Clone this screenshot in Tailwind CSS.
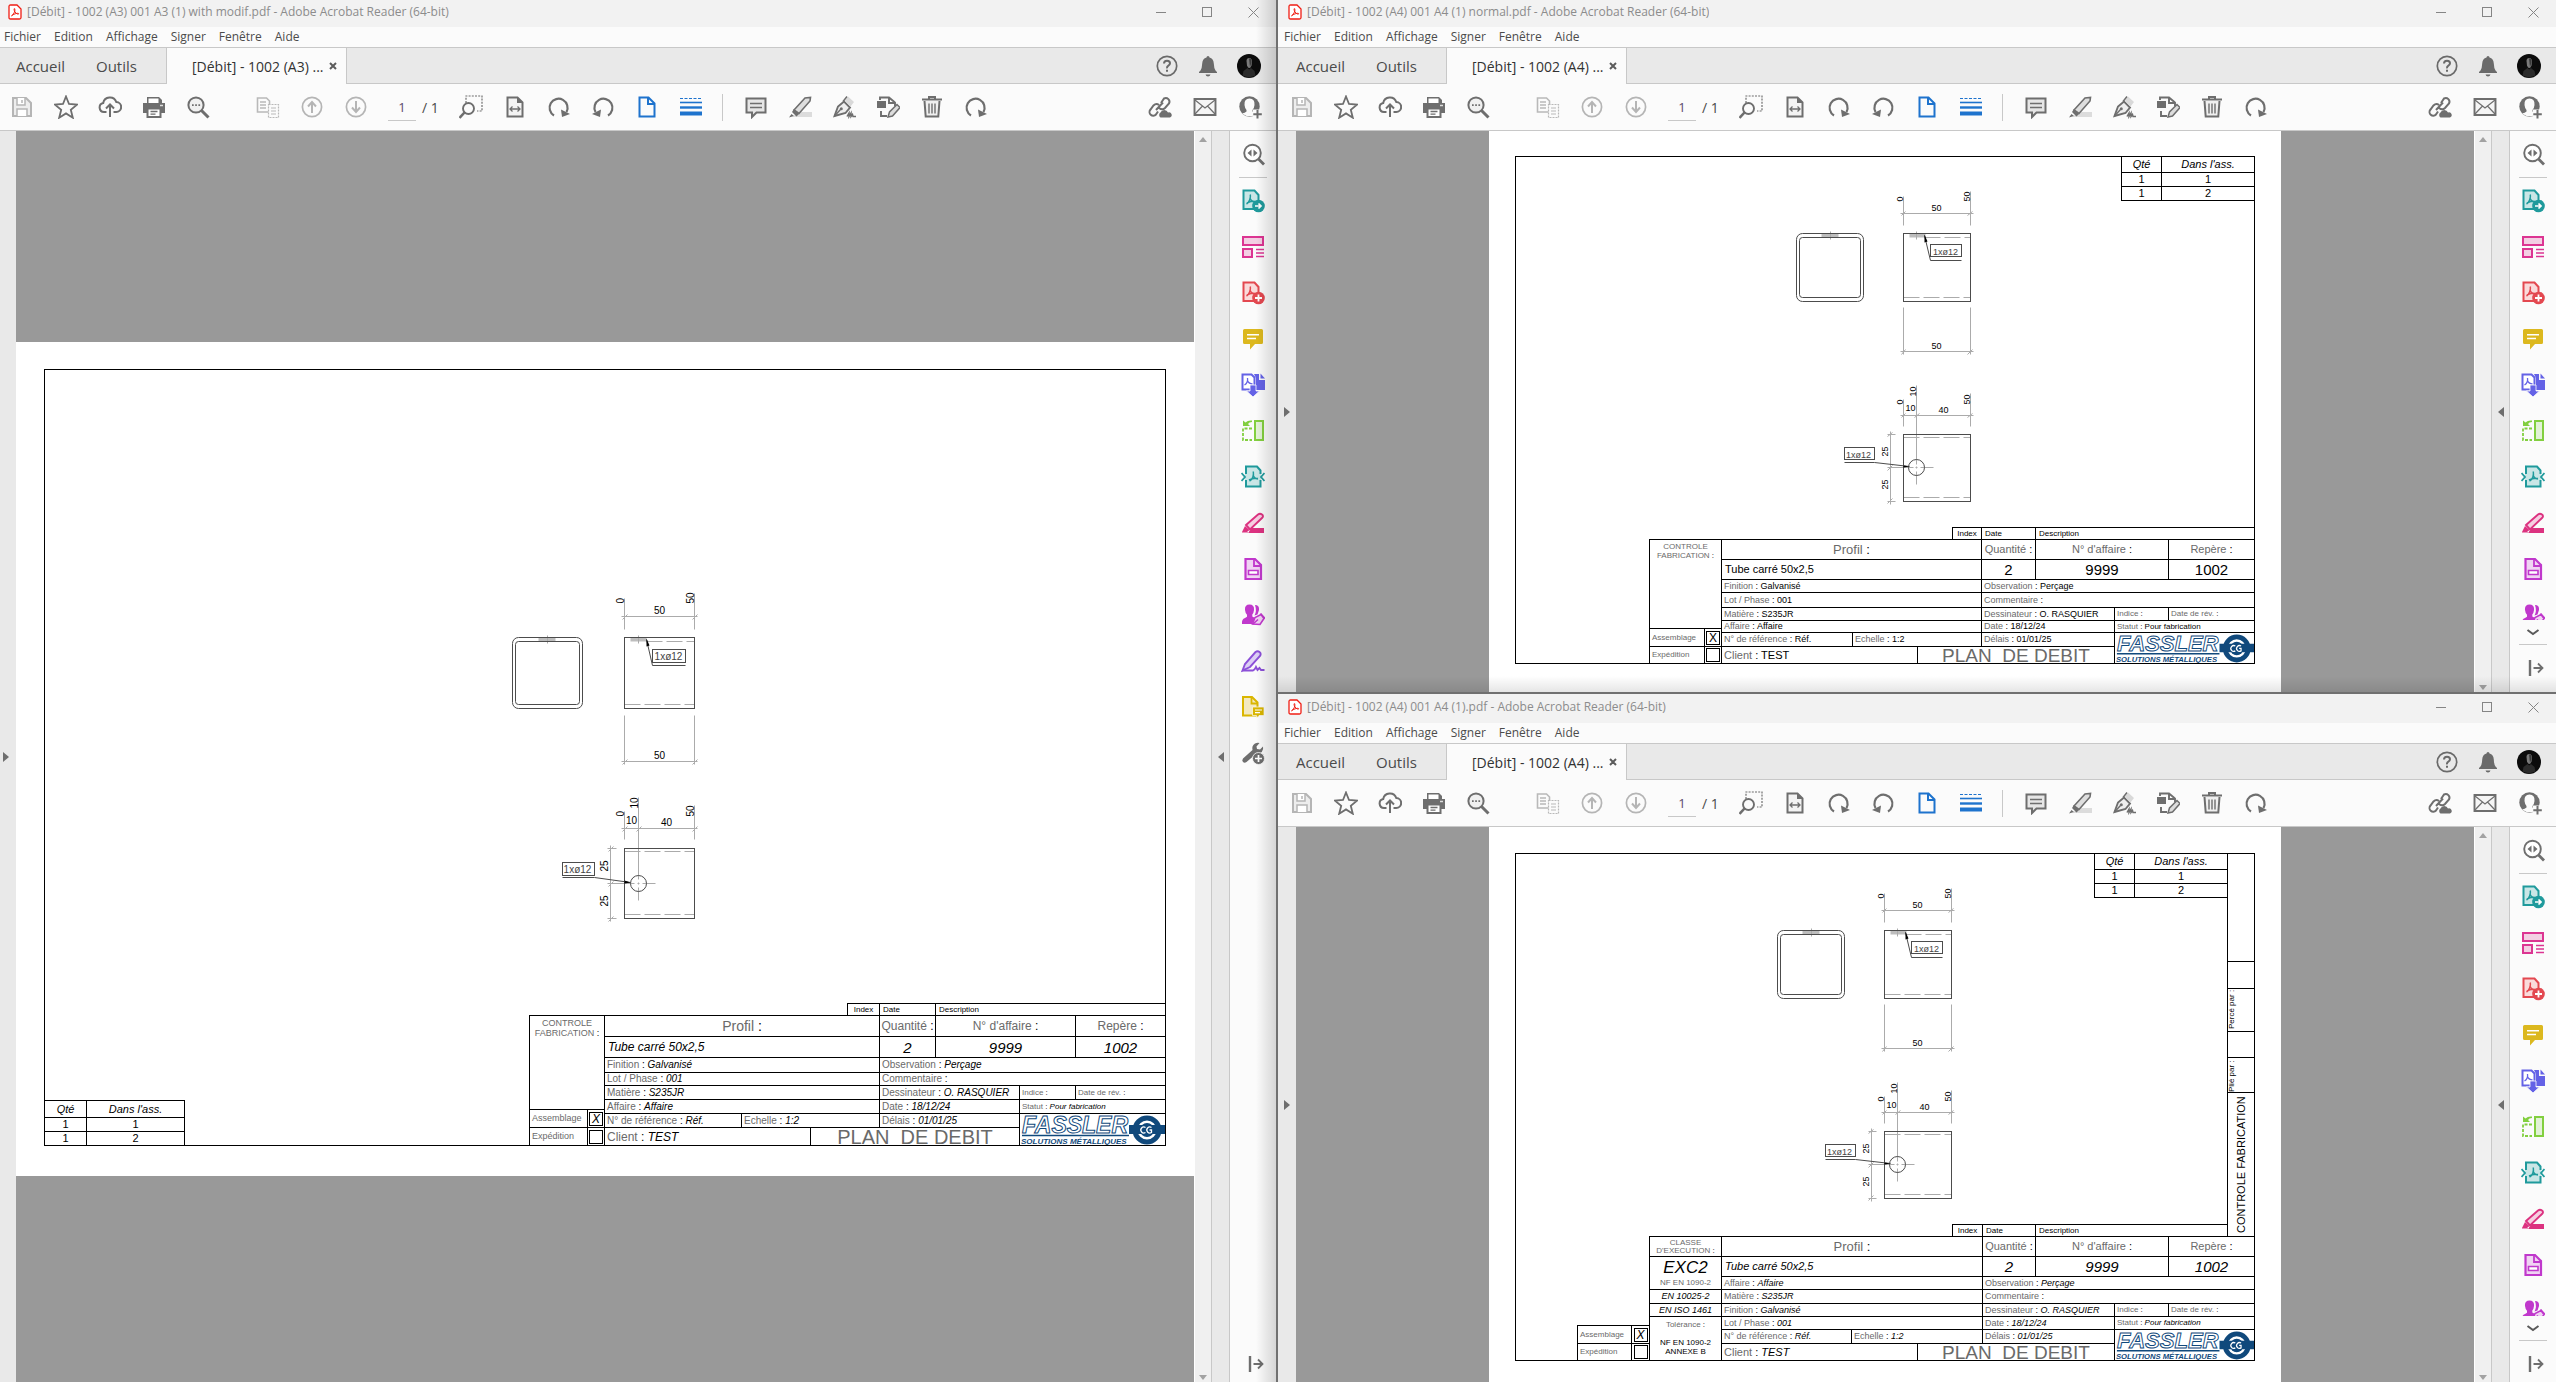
<!DOCTYPE html>
<html lang="fr">
<head>
<meta charset="utf-8">
<title>Adobe Acrobat Reader</title>
<script src="https://cdn.jsdelivr.net/npm/@tailwindcss/browser@4"></script>
</head>
<body class="h-screen overflow-hidden bg-[#707070] font-['Open_Sans',sans-serif] text-[#4b4b4b]">
<svg class="hidden" aria-hidden="true">
  <symbol id="i-pdf" viewBox="0 0 14 16"><path d="M1 2.500Q1 1 2.500 1H9l4 4v8.500q0 1.500-1.500 1.500h-9Q1 15 1 13.500Z" fill="#fff" stroke="#f01e14" stroke-width="1.300"/><path d="M3.500 11.800c2-.8 4-5 3.300-7-.8-1-1.200 1 .2 3.200s4 2.600 3.700 1.700-4-.3-7.200 2.100Z" fill="none" stroke="#f01e14" stroke-width="1"/></symbol>
  <symbol id="i-save" viewBox="0 0 24 24"><path d="M3 3h13l5 5v13H3Z" fill="#ededed" stroke="#b5b5b5" stroke-width="2"/><path d="M7 3v7h8V3M12 5v3M7 21v-7h10v7" fill="#fff" stroke="#b5b5b5" stroke-width="1.500"/></symbol>
  <symbol id="i-star" viewBox="0 0 24 24"><path d="m12 1.500 3 7.500 8 .6-6.200 5.200 2 7.900L12 18.400l-6.800 4.300 2-7.900L1 9.600 9 9Z" fill="none" stroke="#6e6e6e" stroke-width="1.800"/></symbol>
  <symbol id="i-cloud" viewBox="0 0 24 24"><path d="M8.500 17H6a4.500 4.500 0 0 1-.8-8.900A6.800 6.800 0 0 1 18.300 7 5 5 0 0 1 18 17h-2.500" fill="none" stroke="#6e6e6e" stroke-width="2"/><path d="M12 22V10M8 13.500 12 9.500l4 4" fill="none" stroke="#6e6e6e" stroke-width="2"/></symbol>
  <symbol id="i-print" viewBox="0 0 24 24"><path d="M5 2h12l3 3v4H5Z" fill="#6e6e6e"/><path d="M6.500 3.500h10v5h-10Z" fill="#fff"/><path d="M1 8h22v10H1Z" fill="#6e6e6e"/><path d="M5.500 13.500h13V22h-13Z" fill="#fff" stroke="#6e6e6e" stroke-width="2"/><path d="M8.500 16.500h7M8.500 19.200h5" stroke="#6e6e6e" stroke-width="1.300"/><path d="M18 10.500h3" stroke="#ddd" stroke-width="1.500"/></symbol>
  <symbol id="i-zoom" viewBox="0 0 24 24"><circle cx="10" cy="10" r="7.600" fill="#f0f0f0" stroke="#6e6e6e" stroke-width="2"/><path d="m15.500 15.500 7 7" stroke="#6e6e6e" stroke-width="3"/><path d="M6 9.200h1.700v1.700H6Zm3.200 0h1.700v1.700H9.200Zm3.200 0h1.700v1.700h-1.700Z" fill="#6e6e6e"/></symbol>
  <symbol id="i-pages" viewBox="0 0 24 24"><path d="M1.500 3h9l3 3v11h-12Z" fill="none" stroke="#b9b9b9" stroke-width="1.600"/><path d="M4 7h6M4 10h6M4 13h6" stroke="#b9b9b9" stroke-width="1.300"/><path d="M12.500 9.500h10v13h-10Z" fill="#fbfbfb" stroke="#b9b9b9" stroke-width="1.200" stroke-dasharray="2 1"/><path d="M15 13h5M15 16h5M15 19h5" stroke="#b9b9b9" stroke-width="1.200"/></symbol>
  <symbol id="i-up" viewBox="0 0 24 24"><circle cx="12" cy="12" r="9.600" fill="none" stroke="#b5b5b5" stroke-width="1.700"/><path d="M12 18V7m-4 4.500 4-4.500 4 4.500" fill="none" stroke="#b5b5b5" stroke-width="2"/></symbol>
  <symbol id="i-down" viewBox="0 0 24 24"><circle cx="12" cy="12" r="9.600" fill="none" stroke="#b5b5b5" stroke-width="1.700"/><path d="M12 6v11m-4-4.500 4 4.500 4-4.500" fill="none" stroke="#b5b5b5" stroke-width="2"/></symbol>
  <symbol id="i-marquee" viewBox="0 0 24 24"><path d="M7 8V1h16v15h-5" fill="none" stroke="#6e6e6e" stroke-width="1.200" stroke-dasharray="2 1.200"/><circle cx="9.500" cy="13.500" r="5.500" fill="#fbfbfb" stroke="#6e6e6e" stroke-width="1.900"/><path d="m5.500 17.500-5 5.500" stroke="#6e6e6e" stroke-width="2.600"/></symbol>
  <symbol id="i-fit" viewBox="0 0 24 24"><path d="M4.500 2.500h10l5 5v14h-15Z" fill="#f3f3f3" stroke="#6e6e6e" stroke-width="2"/><path d="M14 2v6h6Z" fill="#6e6e6e"/><path d="M7 14h10m-7.500-2.500L7 14l2.500 2.500m5-5L17 14l-2.500 2.500" fill="none" stroke="#6e6e6e" stroke-width="1.300"/></symbol>
  <symbol id="i-cw" viewBox="0 0 24 24"><path d="M7 20.500a9 9 0 1 1 12.500-3.500" fill="none" stroke="#6e6e6e" stroke-width="2.200"/><path d="m14 14.500 1 7.500 8-3Z" fill="#6e6e6e"/></symbol>
  <symbol id="i-ccw" viewBox="0 0 24 24"><path d="M17 20.500A9 9 0 1 0 4.500 17" fill="none" stroke="#6e6e6e" stroke-width="2.200"/><path d="m10 14.500-1 7.500-8-3Z" fill="#6e6e6e"/></symbol>
  <symbol id="i-page" viewBox="0 0 24 24"><path d="M4.500 2.500h9l6 6v13h-15Z M13 3v6h6" fill="none" stroke="#1e73cd" stroke-width="2"/></symbol>
  <symbol id="i-lines" viewBox="0 0 24 24"><path d="M1 3.500h22" stroke="#1e73cd" stroke-width="1.200" stroke-dasharray="3 1.500"/><path d="M1 7.500h22" stroke="#1e73cd" stroke-width="1.600"/><path d="M1 12.500h22" stroke="#1e73cd" stroke-width="2.400"/><path d="M1 18.500h22" stroke="#1e73cd" stroke-width="4"/></symbol>
  <symbol id="i-note" viewBox="0 0 24 24"><path d="M2.500 3.500h19v14h-9l-4.500 4.500v-4.500H2.500Z" fill="#e6e6e6" stroke="#6e6e6e" stroke-width="2"/><path d="M6 8.500h12M6 12.500h12" stroke="#6e6e6e" stroke-width="1.300"/></symbol>
  <symbol id="i-mark" viewBox="0 0 24 24"><path d="M11 17h13v5H4Z" fill="#dcdcdc"/><path d="m6 15 11-12 5.500-.5L22 6 11 18.500Z" fill="#dedede" stroke="#6e6e6e" stroke-width="1.600"/><path d="m6 14 5 5-2.500 2.500L4 17Zm-2.500 5L6 21l-5 1.500Z" fill="#6e6e6e"/></symbol>
  <symbol id="i-sign" viewBox="0 0 24 24"><path d="M2.500 21 6 11.500 12 6.500l6 6-4.500 5.500Z" fill="#eee" stroke="#6e6e6e" stroke-width="1.900"/><path d="m2.500 21 6-6.500" stroke="#6e6e6e" stroke-width="1.400"/><circle cx="9.300" cy="13.800" r="1.500" fill="#6e6e6e"/><path d="m13 5.500 3-4 6 5.500-3.500 4.500Z" fill="#d9d9d9"/><path d="m11 6.500 4-5M15 21.500l2-3.500v3.500l2-3.500v3.500l1.500-2 .5 2h3" fill="none" stroke="#6e6e6e" stroke-width="1.500"/></symbol>
  <symbol id="i-edit" viewBox="0 0 24 24"><path d="M1 6h9v7H1Z" fill="#6e6e6e"/><path d="M4 5V2.500h9l6 5M5 16v5h6M13 2v6h6v3" fill="none" stroke="#6e6e6e" stroke-width="1.900"/><path d="m12 22 1.500-5L21 9.500l3 3L16.500 21Z" fill="#ddd" stroke="#6e6e6e" stroke-width="1.500"/></symbol>
  <symbol id="i-trash" viewBox="0 0 24 24"><path d="M2 4.500h20M9 4V2h6v2" fill="none" stroke="#6e6e6e" stroke-width="2"/><path d="m4.500 6 1.200 15.500h12.600L19.500 6" fill="#efefef" stroke="#6e6e6e" stroke-width="2"/><path d="M9 8.500v10M12 8.500v10M15 8.500v10" stroke="#6e6e6e" stroke-width="1.400"/></symbol>
  <symbol id="i-link" viewBox="0 0 24 24"><path d="m13 8 3-4.500a3.700 3.700 0 0 1 5 5L17 13c-2 2-4 1.500-6 0M11 10c-2-1.500-4-1-5.500.5L2.500 14.500a3.700 3.700 0 0 0 5.500 5l2-3M8 15l7-7.500" fill="none" stroke="#6e6e6e" stroke-width="2"/><path d="M12.500 22.500a3 3 0 0 1 0-5 4 4 0 0 1 7.500 0 2.600 2.600 0 0 1 2 5Z" fill="#6e6e6e"/></symbol>
  <symbol id="i-mail" viewBox="0 0 24 24"><path d="M1.500 4h21v16h-21Z" fill="#f5f5f5" stroke="#6e6e6e" stroke-width="1.900"/><path d="m2 5 10 8L22 5M2 19l7.500-8M22 19l-7.500-8" fill="none" stroke="#6e6e6e" stroke-width="1.200"/></symbol>
  <symbol id="i-user" viewBox="0 0 24 24"><circle cx="11.500" cy="11.500" r="10.200" fill="#6e6e6e"/><path d="M11.500 3.500q5.500 0 5 6.500-.3 3-2 5v1.500q1.500 1.300 4.500 2-3.500 2.700-7.500 2.700T4 18.500q3-.7 4.500-2V15q-1.700-2-2-5-.5-6.500 5-6.500Z" fill="#fbfbfb"/><path d="M15 14.500h9V24h-9Z" fill="#fbfbfb"/><path d="M19.500 15v8.500M15.300 19.200h8.500" stroke="#6e6e6e" stroke-width="2"/></symbol>
  <symbol id="i-help" viewBox="0 0 24 24"><circle cx="12" cy="12" r="9.700" fill="none" stroke="#6a6a6a" stroke-width="1.700"/><path d="M9 9.500q0-2.800 3-2.800t3 2.600q0 1.500-1.600 2.400T12 14.300" fill="none" stroke="#6a6a6a" stroke-width="2"/><path d="M11 15.700h2v2h-2Z" fill="#6a6a6a"/></symbol>
  <symbol id="i-bell" viewBox="0 0 24 24"><path d="M12 2q1.500 0 1.500 1.500 4 1 4.300 6 .2 5 1.700 7l1.500 1.500v1H3v-1l1.500-1.500q1.500-2 1.700-7 .3-5 4.300-6Q10.500 2 12 2ZM9.500 20.500h5q-.5 2-2.500 2t-2.500-2Z" fill="#6a6a6a"/></symbol>
  <symbol id="i-avatar" viewBox="0 0 24 24"><circle cx="12" cy="12" r="12" fill="#0b0b0b"/><path d="M9.500 7q0-3 2.700-3T15 7.500l-.5 4q-1 2.500-2.300 2.500T10 11.500Z" fill="#7a7a7a"/><path d="M12 4.500q3-.5 2.500 4L13 13Z" fill="#3a3a3a"/><path d="m6.500 17 4-3 1.700 1.500L14 14l3.500 3 1 4.500-6.500 2-6.500-2Z" fill="#2b2b2b"/></symbol>
  <symbol id="s-find" viewBox="0 0 24 24"><circle cx="11.500" cy="11" r="8.300" fill="#fff" stroke="#6e6e6e" stroke-width="1.900"/><path d="m17.500 17 5.500 5.500" stroke="#6e6e6e" stroke-width="2.800"/><path d="M10.500 7.500v7L6.500 11Zm2 0v7l4-3.500Z" fill="#6e6e6e"/></symbol>
  <symbol id="s-export" viewBox="0 0 24 24"><path d="M2.500 1.500h11l4 4.500v14h-15Z" fill="#c9e6e6" stroke="#1f9a9c" stroke-width="2"/><path d="M5.500 15c2.500-1.500 4.500-6 3.800-9.500M9 9q1 4 6 4.500M6 14q4-2.500 8-1.500" fill="none" stroke="#1f9a9c" stroke-width="1.500"/><circle cx="17.500" cy="17" r="6.300" fill="#1f9a9c"/><path d="M14 17h6m-2.500-2.500L20 17l-2.500 2.500" fill="none" stroke="#fff" stroke-width="1.700"/></symbol>
  <symbol id="s-organize" viewBox="0 0 24 24"><path d="M2 2h20v8H2ZM2 14h9v8H2Z" fill="#f3cfe3" stroke="#dc3592" stroke-width="2"/><path d="M15 14.500h8M15 18h8M15 21.500h8" stroke="#dc3592" stroke-width="1.400"/></symbol>
  <symbol id="s-create" viewBox="0 0 24 24"><path d="M2.500 1.500h11l4 4.500v14h-15Z" fill="#fadadb" stroke="#e34850" stroke-width="2"/><path d="M5.500 15c2.500-1.500 4.500-6 3.800-9.500M9 9q1 4 6 4.500M6 14q4-2.500 8-1.500" fill="none" stroke="#e34850" stroke-width="1.500"/><circle cx="17.500" cy="17" r="6.300" fill="#e34850"/><path d="M14 17h7M17.500 13.500v7" stroke="#fff" stroke-width="1.800"/></symbol>
  <symbol id="s-comment" viewBox="0 0 24 24"><path d="M3.500 2h17Q22 2 22 3.500v12q0 1.500-1.500 1.500H14l-5 5.500V17H3.500Q2 17 2 15.500v-12Q2 2 3.500 2Z" fill="#dcb81e"/><path d="M6 7.800h12M6 11.500h9" stroke="#fff" stroke-width="1.600"/></symbol>
  <symbol id="s-combine" viewBox="0 0 24 24"><path d="M1.500 1.500h9l3 3v12h-12Z" fill="#fff" stroke="#6462e6" stroke-width="2"/><path d="M3.500 12c2.500-1.500 3.500-4 3-7M6.500 7.500q1 3 5 3.500" fill="none" stroke="#6462e6" stroke-width="1.300"/><path d="M13 1h5v6h6v10h-9V5Z" fill="#6462e6"/><path d="m19.500.5 4.500 5h-4.500Z" fill="#6462e6"/><path d="M9 12h6v6h3.500L12 24l-6.500-6H9Z" fill="#6462e6" stroke="#fff" stroke-width=".8"/></symbol>
  <symbol id="s-scan" viewBox="0 0 24 24"><path d="M14 2h8v19h-8Z" fill="#e2f2d6" stroke="#82cf3f" stroke-width="2"/><path d="M11 9.500H2V21h9" fill="none" stroke="#82cf3f" stroke-width="1.800" stroke-dasharray="3 1.500"/><path d="M2 1.500V7h7L7 5q1-2 4-2V1.500Q7 1 4.500 3.500Z" fill="#82cf3f"/></symbol>
  <symbol id="s-compress" viewBox="0 0 24 24"><path d="M5 9V1.500h11l3.500 4V9m0 6v6.500H5V15" fill="#c9e6e6" stroke="#1f9a9c" stroke-width="2"/><path d="M4 9h16v6H4Z" fill="#c9e6e6"/><path d="M8.500 16c2.500-1.500 4.500-5 3.800-9.500M12 10q1 3.500 5 4M8 15q5-2.500 9-1.500" fill="none" stroke="#1f9a9c" stroke-width="1.500"/><path d="m.5 8 3.500 4-3.500 4m23-8L20 12l3.500 4" fill="none" stroke="#1f9a9c" stroke-width="1.800"/></symbol>
  <symbol id="s-redact" viewBox="0 0 24 24"><path d="m5 14 12-10.500q2-1.500 4 0t0 3.500L9 18.500Z" fill="#f6cfe2" stroke="#dc3280" stroke-width="1.900"/><path d="m1 21 3-6 4.500 4L6 21Z" fill="#dc3280"/><path d="M8 21.500v-1l3-3.500h12v5H1v-.5Z" fill="#dc3280"/></symbol>
  <symbol id="s-form" viewBox="0 0 24 24"><path d="M4.500 2H14l6 6v14H4.500Z" fill="#f0d3f3" stroke="#c038cc" stroke-width="2.200"/><path d="M13 2.500V9h7" fill="none" stroke="#c038cc" stroke-width="1.800"/><path d="M7.500 13.500h9.500v4H7.500Z" fill="#fff" stroke="#c038cc" stroke-width="1.600"/></symbol>
  <symbol id="s-people" viewBox="0 0 24 24"><path d="M8.500 1.500q5 0 4.500 5.500-.3 3-1.700 4.500v2L14 15l-3 6H1q-.5-5 3-6l2-1.300v-2Q4.300 10 4 7q-.5-5.500 4.500-5.500Z" fill="#c038cc"/><path d="M14 2q4.500 0 4 5l-1.500 4.500-3 1Q16 8 14 2Z" fill="#c038cc"/><path d="m11.500 21 2.500-6.500 6-3 3 4-4 6Z" fill="#f0d3f3" stroke="#c038cc" stroke-width="1.600"/><path d="m12 21 5-4.500M19.500 10.500l4.500 5" stroke="#c038cc" stroke-width="1.600"/></symbol>
  <symbol id="s-fill" viewBox="0 0 24 24"><path d="M1.500 21.500 4 15 14.500 3q2-1.500 4 0t.5 4L9 18Z" fill="#dccff5" stroke="#8c50d8" stroke-width="1.900"/><path d="M1 21.500h11q2-1 3-3.500l1.500 3 2-2 1.500 2h3.500" fill="none" stroke="#8c50d8" stroke-width="1.900"/></symbol>
  <symbol id="s-more" viewBox="0 0 24 24"><path d="M2 2h9l5.500 5.500v13H2Z" fill="#f3e9c0" stroke="#dab600" stroke-width="2"/><path d="M10.500 2v6.500h6" fill="none" stroke="#dab600" stroke-width="1.800"/><path d="M11.500 12h11.500v8.500h-5L15.500 23v-2.500h-4Z" fill="#dab600" stroke="#fbfbfb" stroke-width=".7"/><path d="M14 15h7M14 17.700h5" stroke="#fff" stroke-width="1.200"/></symbol>
  <symbol id="s-tools" viewBox="0 0 24 24"><path d="M2 17.500 11.500 9Q10.500 4.500 14 2.500q2.500-1.300 4.500-.5l-3 3.500.5 2.500 3 .5 3-3q.8 3-1.200 5.500-2 2-5.300 1.500L5.500 21Q3.500 22.500 2 21t0-3.500Z" fill="#6e6e6e"/><circle cx="17.500" cy="17.500" r="6" fill="#6e6e6e" stroke="#fbfbfb" stroke-width=".8"/><path d="M14 17.500h7M17.500 14v7" stroke="#fff" stroke-width="1.700"/></symbol>
  <symbol id="s-chevron" viewBox="0 0 24 24"><path d="m6.500 10 5.500 4 5.500-4" fill="none" stroke="#5a5a5a" stroke-width="2"/></symbol>
  <symbol id="s-expand" viewBox="0 0 24 24"><path d="M9 4v16" stroke="#6e6e6e" stroke-width="2.400"/><path d="M12.500 12h9M17 7.500l4.500 4.500-4.500 4.500" fill="none" stroke="#6e6e6e" stroke-width="1.800"/></symbol>
  <symbol id="fassler" viewBox="0 0 145 31">
    <g font-family="Liberation Sans, sans-serif" font-weight="bold" font-style="italic">
      <text x="2" y="19" font-size="23" fill="#fff" stroke="#10497c" stroke-width="1">FASSLER</text>
      <text x="1" y="30" font-size="8" fill="#10497c">SOLUTIONS MÉTALLIQUES</text>
    </g>
    <path d="M2 21.500h107" stroke="#10497c" stroke-width="1.500"/>
    <circle cx="127" cy="16" r="12" fill="#fff" stroke="#10497c" stroke-width="5"/>
    <path d="M109 11h36v9h-36Z" fill="#10497c"/><circle cx="127" cy="16" r="7" fill="#10497c"/>
    <path d="M125.500 13.500a3 3 0 1 0 0 5M131.500 13.500a3 3 0 1 0 0 5v-2.500h-2" fill="none" stroke="#fff" stroke-width="1.300"/>
  </symbol>
</svg>

<main id="desktop" class="flex h-full"></main>

<script>
const icon = (id, cls = 'size-6') => `<svg class="${cls} shrink-0" aria-hidden="true"><use href="#${id}"/></svg>`;
const button = (id, label, cls = 'w-11') => `<button type="button" aria-label="${label}" class="flex h-full ${cls} shrink-0 items-center justify-center">${icon(id)}</button>`;

const sideTools = [['s-export','Exporter'],['s-organize','Organiser'],['s-create','Créer un PDF'],['s-comment','Commentaire'],['s-combine','Combiner'],['s-scan','Numériser'],['s-compress','Compresser'],['s-redact','Biffer'],['s-form','Formulaire'],['s-people','Signatures'],['s-fill','Remplir et signer'],['s-more','Commentaires'],['s-tools','Outils']];

function appWindow(w) {
  return `
  <section class="relative flex min-h-0 flex-col overflow-hidden ${w.frame}">
    <header class="flex ${w.titleH} shrink-0 items-center bg-[#f2f2f2] ${w.padL}">
      <svg class="ml-2 h-4 w-3.5" aria-hidden="true"><use href="#i-pdf"/></svg>
      <h1 class="ml-[5px] truncate text-[12px] text-[#8c8c8c]">${w.title}</h1>
      <div class="ml-auto flex h-full">
        <button type="button" aria-label="Réduire" class="flex w-[46px] items-center justify-center"><span class="h-px w-[10px] bg-[#858585]"></span></button>
        <button type="button" aria-label="Agrandir" class="flex w-[46px] items-center justify-center"><span class="size-[10px] border border-[#858585]"></span></button>
        <button type="button" aria-label="Fermer" class="flex w-[46px] items-center justify-center"><svg class="size-[11px]" viewBox="0 0 11 11"><path d="m.5.500 10 10m0-10-10 10" stroke="#858585"/></svg></button>
      </div>
    </header>
    <nav class="flex h-[21px] shrink-0 items-center gap-[13px] border-b border-[#c8c8c8] bg-[#fbfbfb] ${w.padL} text-[12px] leading-none">
      <button type="button" class="ml-1">Fichier</button><button type="button">Edition</button><button type="button">Affichage</button><button type="button">Signer</button><button type="button">Fenêtre</button><button type="button">Aide</button>
    </nav>
    <div class="relative flex h-9 shrink-0 bg-[#e9e9e9] ${w.padL}">
      <span class="absolute inset-x-0 bottom-0 h-px bg-[#c8c8c8]"></span>
      <button type="button" class="ml-4 w-20 text-left text-[15px]">Accueil</button>
      <button type="button" class="w-[70px] text-left text-[15px]">Outils</button>
      <div class="relative flex w-[181px] items-center border-x border-[#c8c8c8] bg-[#fbfbfb] pl-[25px]">
        <span class="w-[137px] text-[14px] text-[#323232]">${w.tab}</span>
        <button type="button" aria-label="Fermer l'onglet"><svg class="size-2" viewBox="0 0 8 8"><path d="m1 1 6 6m0-6L1 7" stroke="#5c5c5c" stroke-width="2"/></svg></button>
      </div>
      <div class="ml-auto flex pr-[7px]">${button('i-help','Aide','w-[41px]')}${button('i-bell','Notifications','w-[41px]')}${button('i-avatar','Profil','w-[41px]')}</div>
    </div>
    <div class="flex h-[47px] shrink-0 items-center border-b border-[#c8c8c8] bg-[#fbfbfb] ${w.padL}">
      <div class="flex h-full">${button('i-save','Enregistrer')}${button('i-star','Favori')}${button('i-cloud','Cloud')}${button('i-print','Imprimer')}${button('i-zoom','Rechercher')}</div>
      <div class="ml-[26px] flex h-full">${button('i-pages','Vignettes')}${button('i-up','Page précédente')}${button('i-down','Page suivante')}</div>
      <input aria-label="Page" value="1" class="ml-[10px] h-[27px] w-7 border-b border-[#c8c8c8] bg-transparent text-center text-[13px] text-[#5b4a6b]">
      <span class="ml-[6px] text-[14px] text-[#4b4b4b]">/&nbsp;1</span>
      <div class="ml-auto flex h-full w-[827px] shrink-0 items-center">
        ${button('i-marquee','Zoom')}${button('i-fit','Ajuster la largeur')}${button('i-cw','Rotation horaire')}${button('i-ccw','Rotation antihoraire')}${button('i-page','Page')}${button('i-lines','Défilement')}
        <span class="mr-[11px] ml-[9px] h-[27px] w-px bg-[#c8c8c8]"></span>
        ${button('i-note','Note')}${button('i-mark','Surligner')}${button('i-sign','Signer')}${button('i-edit','Modifier')}${button('i-trash','Supprimer')}${button('i-cw','Pivoter')}
        <div class="ml-auto flex h-full pr-1">${button('i-link','Partager le lien','w-[45px]')}${button('i-mail','Envoyer','w-[45px]')}${button('i-user','Partager','w-[45px]')}</div>
      </div>
    </div>
    <div class="flex min-h-0 flex-1">
      <button type="button" aria-label="Volet gauche" class="flex ${w.stripW} shrink-0 items-center bg-[#e9e9e9]"><svg class="h-3 w-[6px]" viewBox="0 0 6 12"><path d="M0 1v10l6-5Z" fill="#6e6e6e"/></svg></button>
      <div class="flex min-w-0 flex-1 overflow-hidden bg-[#999999] ${w.docAlign}">${w.doc}</div>
      <div class="flex w-[18px] shrink-0 flex-col items-center justify-between border-r border-l border-r-[#c8c8c8] border-l-white bg-[#f0f0f0] pt-[6px] pb-[2px]">
        <svg class="h-[5px] w-2" viewBox="0 0 8 5"><path d="M0 5h8L4 0Z" fill="#a2a2a2"/></svg>
        <svg class="h-[5px] w-2" viewBox="0 0 8 5"><path d="M0 0h8L4 5Z" fill="#a2a2a2"/></svg>
      </div>
      <button type="button" aria-label="Volet droit" class="flex w-[18px] shrink-0 items-center justify-center border-r border-[#c8c8c8] bg-[#e9e9e9]"><svg class="h-3 w-[6px]" viewBox="0 0 6 12"><path d="M6 1v10L0 6Z" fill="#6e6e6e"/></svg></button>
      <aside class="flex w-[46px] shrink-0 flex-col items-center bg-[#fbfbfb]">
        <div class="flex min-h-0 w-full flex-1 flex-col items-center overflow-hidden">
          <button type="button" aria-label="Rechercher" class="flex h-[46px] shrink-0 items-center">${icon('s-find')}</button>
          <span class="h-px w-7 shrink-0 bg-[#c8c8c8]"></span>
          ${sideTools.map(t => `<button type="button" aria-label="${t[1]}" class="flex h-[46px] shrink-0 items-center">${icon(t[0])}</button>`).join('')}
        </div>
        ${w.short ? `${icon('s-chevron')}<span class="h-px w-7 shrink-0 bg-[#c8c8c8]"></span>` : ''}
        <button type="button" aria-label="Développer" class="pt-[11px] ${w.footPad}">${icon('s-expand')}</button>
      </aside>
    </div>
    ${w.shadow}
  </section>`;
}

/* Three views of the cut part; every length is given at the A3 scale. */
function drawing(ox, oy, s, big) {
  const r = v => Math.round(v * s) + 0.5;
  const L = (a, b, c, d) => `M${r(a)} ${r(b)}L${r(c)} ${r(d)}`;
  const tick = (x, y) => L(x - 2.500, y + 2.500, x + 2.500, y - 2.500);
  const T = (x, y, t) => `<text x="${r(x)}" y="${r(y)}" text-anchor="middle">${t}</text>`;
  const V = (x, y, t) => `<text transform="translate(${r(x)} ${r(y)}) rotate(-90)">${t}</text>`;
  const box = (x, y, w, h, rx = 0) => `<rect x="${r(x)}" y="${r(y)}" width="${Math.round(w * s)}" height="${Math.round(h * s)}" rx="${rx}"/>`;
  return `<g transform="translate(${ox} ${oy})" font-family="Liberation Sans, sans-serif" font-size="${big ? 10 : 9}">
    <g fill="#bdbdbd">
      <rect x="${r(6)}" y="${r(0)}" width="16" height="4"/><rect x="${r(-86)}" y="${r(0)}" width="17" height="4"/></g>
    <path fill="none" stroke="#ababab" d="${[
      L(-3,-21,73,-21), L(0,-39,0,-8), L(70,-44,70,-8), tick(0,-21), tick(70,-21),
      L(0,78,0,127), L(70,78,70,127), L(-3,124,73,124), tick(0,124), tick(70,124),
      L(14,-2,14,6), L(-77,-2,-77,6),
      L(0,174,0,202), L(70,168,70,202), L(-3,191,73,191), tick(0,191), tick(14,191), tick(70,191),
      L(14,160,14,242), L(14,245,14,247), L(14,250,14,263),
      L(-17,246,10,246), L(13,246,15,246), L(18,246,31,246),
      L(-14,208,-14,284), L(-17,211,-8,211), L(-17,281,-8,281), tick(-14,211), tick(-14,246), tick(-14,281)].join('')}"/>
    <path fill="none" stroke="#ababab" stroke-dasharray="16 4" d="${L(22,4,70,4)}${L(0,67,70,67)}${L(0,214,70,214)}${L(0,277,70,277)}"/>
    <g fill="none" stroke="#4c4c4c">
      ${box(0,0,70,71)}${box(-112,0,70,71,6)}${box(-109,4,64,63,3)}${box(0,211,70,70)}
      <circle cx="${r(14)}" cy="${r(246)}" r="8"/></g>
    <g fill="#fff" stroke="#4c4c4c">${box(28,12,33,13)}${box(-62,225,32,13)}</g>
    <path fill="none" stroke="#4c4c4c" d="${L(22,2,28,28)}${L(28,28,61,28)}${L(-62,240,-30,240)}${L(-30,240,6,245)}"/>
    <path d="M${r(22)} ${r(1)}L${r(22)} ${r(9)}L${r(25)} ${r(8)}ZM${r(6)} ${r(245)}L${r(0)} ${r(243)}L${r(0)} ${r(246)}Z"/>
    <g fill="#444">${T(44,22,'1xø12')}${T(-47,235,'1xø12')}</g>
    ${T(35,-24,'50')}${T(35,121,'50')}${T(7,186,'10')}${T(42,188,'40')}
    ${V(-1,-34,'0')}${V(69,-34,'50')}${V(-1,179,'0')}${V(13,171,'10')}${V(69,179,'50')}${V(-17,234,'25')}${V(-17,269,'25')}
  </g>`;
}

const big = { body: 'text-[10px]', head: 'text-[12px]', profil: 'text-[14px]', num: 'text-[15px]', tube: 'text-[12px]', small: 'text-[9px]', tiny: 'text-[8px]', plan: 'text-[20px]' };
const small = { body: 'text-[9px]', head: 'text-[11px]', profil: 'text-[13px]', num: 'text-[15px]', tube: 'text-[11px]', small: 'text-[8px]', tiny: 'text-[8px]', plan: 'text-[19px]' };

/* area: row start / column start / row end / column end */
const cell = (area, cls, html) => `<div class="flex min-h-0 min-w-0 items-center whitespace-nowrap bg-white leading-none ${cls}" style="grid-area:${area}">${html}</div>`;
const field = (area, size, label, value, it = '') => cell(area, `${size} pl-[2px] text-[#6a6a6a]`, `<span>${label} <b class="font-normal text-black">:</b> <span class="text-black ${it}">${value}</span></span>`);
const colon = '<b class="font-normal text-black">:</b>';
const check = (area, size, id, name) => cell(area, `${size} pl-[2px] text-[#6a6a6a]`, `<label for="${id}">${name}</label>`);
const tick = (area, id, on, it) => cell(area, 'justify-center', `<input type="checkbox" id="${id}" ${on ? 'checked' : ''} class="flex size-[14px] appearance-none items-center justify-center border border-black text-[12px] leading-none text-black checked:before:content-['X'] ${it}">`);

/* Right-hand part of the title block: c = column offset, R = row lines, order = field order */
function common(z, it, c, R, order) {
  const a = (r1, c1, r2, c2) => `${R[r1]}/${c1 + c}/${R[r2]}/${c2 + c}`;
  const names = { fin: ['Finition', 'Galvanisé'], lot: ['Lot / Phase', '001'], mat: ['Matière', 'S235JR'], aff: ['Affaire', 'Affaire'] };
  const grey = 'justify-center text-[#6a6a6a] whitespace-pre';
  return cell(a(0,1,1,4), `${z.profil} ${grey}`, `Profil ${colon}`) + cell(a(0,4,1,5), `${z.head} ${grey}`, `Quantité ${colon}`) +
    cell(a(0,5,1,7), `${z.head} ${grey}`, `N° d'affaire ${colon}`) + cell(a(0,7,1,8), `${z.head} ${grey}`, `Repère ${colon}`) +
    cell(a(1,1,2,4), `${z.tube} pl-[3px] text-black ${it}`, 'Tube carré 50x2,5') +
    cell(a(1,4,2,5), `${z.num} justify-center text-black ${it}`, '2') + cell(a(1,5,2,7), `${z.num} justify-center text-black ${it}`, '9999') + cell(a(1,7,2,8), `${z.num} justify-center text-black ${it}`, '1002') +
    order.map((k, i) => field(a(2 + i, 1, 3 + i, 4), z.body, names[k][0], names[k][1], it)).join('') +
    field(a(2,4,3,8), z.body, 'Observation', 'Perçage', it) + field(a(3,4,4,8), z.body, 'Commentaire', '') +
    field(a(4,4,5,6), z.body, 'Dessinateur', 'O. RASQUIER', it) + field(a(4,6,5,7), z.tiny, 'Indice', '') + field(a(4,7,5,8), z.tiny, 'Date de rév.', '') +
    field(a(5,4,6,6), z.body, 'Date', '18/12/24', it) + field(a(5,6,6,8), z.tiny, 'Statut', 'Pour fabrication', it) +
    field(a(6,1,7,2), z.body, 'N° de référence', 'Réf.', it) + field(a(6,2,7,4), z.body, 'Echelle', '1:2', it) + field(a(6,4,7,6), z.body, 'Délais', '01/01/25', it) +
    field(a(7,1,8,3), z.tube, 'Client', 'TEST', it) + cell(a(7,3,8,6), `${z.plan} ${grey}`, 'PLAN  DE DEBIT') +
    cell(a(6,6,8,8), '', '<svg class="h-full w-full" role="img" aria-label="Fassler Solutions Métalliques"><use href="#fassler"/></svg>');
}

const indexRow = cols => `<div class="grid h-3 ${cols} gap-px self-end border-t border-l border-black bg-black text-[8px] leading-none text-black"><div class="flex items-center justify-center bg-white">Index</div><div class="flex items-center bg-white pl-[3px]">Date</div><div class="flex items-center bg-white pl-[3px]">Description</div></div>`;

const qty = (cols, h, rowH) => `<table class="table-fixed border-collapse text-center text-[11px] leading-none text-black">
  <colgroup><col class="${cols[0]}"><col class="${cols[1]}"></colgroup>
  <thead><tr class="${h} italic"><th class="border border-black p-0 font-normal">Qté</th><th class="border border-black p-0 font-normal">Dans l'ass.</th></tr></thead>
  <tbody><tr class="${rowH}"><td class="border border-black p-0">1</td><td class="border border-black p-0">1</td></tr><tr class="${rowH}"><td class="border border-black p-0">1</td><td class="border border-black p-0">2</td></tr></tbody></table>`;

function controlBlock(z, it, cols, idx, id) {
  return `<div class="flex flex-col">${indexRow(idx)}
    <div class="grid ${cols} gap-px border-t border-l border-black bg-black">
      ${cell('1/1/7/3', `${z.small} flex-col gap-px pt-[3px] text-[#6a6a6a]`, `<span>CONTROLE</span><span>FABRICATION ${colon}</span>`)}
      ${check('7/1/9/2', z.small, id + 'a', 'Assemblage')}${tick('7/2/9/3', id + 'a', true, it)}
      ${check('9/1/10/2', z.small, id + 'e', 'Expédition')}${tick('9/2/10/3', id + 'e', false, it)}
      ${common(z, it, 2, [1,2,3,4,5,6,8,9,10], ['fin','lot','mat','aff'])}
    </div></div>`;
}

const font = "font-['Liberation_Sans',Arial,sans-serif]";
const doc1 = `
  <article class="relative flex h-[834px] w-full bg-white px-7 pt-[27px] pb-[30px] ${font}">
    <svg class="absolute top-0 left-0 h-[834px] w-[1178px]">${drawing(608, 295, 1, true)}</svg>
    <div class="flex flex-1 items-end justify-between border border-black">
      <div class="-mb-px -ml-px">${qty(['w-[42px]','w-[98px]'],'h-[17px]','h-[14px]')}</div>
      ${controlBlock(big, 'italic', 'grid-cols-[57px_16px_136px_68px_68px_55px_83px_55px_89px] grid-rows-[20px_20px_14px_12px_13px_9px_3px_13px_17px]', 'grid-cols-[31px_55px_229px]', 'd1')}
    </div>
  </article>`;
const doc2 = `
  <article class="relative flex h-full w-[792px] flex-col bg-white pt-[25px] pr-[26px] pl-[26px] ${font}">
    <svg class="absolute top-0 left-0 h-full w-full">${drawing(414, 102, 0.953, false)}</svg>
    <div class="flex h-[508px] flex-col items-end justify-between border border-black">
      <div class="-mt-px -mr-px">${qty(['w-[40px]','w-[93px]'],'h-[16px]','h-[14px]')}</div>
      ${controlBlock(small, '', 'grid-cols-[54px_16px_130px_64px_63px_53px_78px_53px_85px] grid-rows-[19px_19px_12px_14px_12px_7px_3px_13px_16px]', 'grid-cols-[28px_53px_218px]', 'd2')}
    </div>
  </article>`;
const z = small, g = 'justify-center text-[#6a6a6a]';
const sideCell = 'flex rotate-180 items-center bg-white leading-none whitespace-nowrap [writing-mode:vertical-rl]';
const doc3 = `
  <article class="relative flex h-full w-[792px] flex-col bg-white pt-[26px] pr-[26px] pl-[26px] ${font}">
    <svg class="absolute top-0 left-0 h-full w-full">${drawing(395, 103, 0.953, false)}</svg>
    <div class="flex h-[508px] flex-col border border-black">
      <div class="flex flex-1 items-stretch justify-end">
        <div class="flex flex-col items-end justify-between">
          <div class="-mt-px -mr-px">${qty(['w-[40px]','w-[93px]'],'h-[16px]','h-[14px]')}</div>
          ${indexRow('grid-cols-[29px_52px_191px]')}
        </div>
        <div class="grid w-[27px] grid-rows-[107px_26px_42px_25px_34px_1fr] gap-px border-l border-black bg-black text-black">
          <div class="bg-white"></div><div class="bg-white"></div>
          <div class="${sideCell} text-[8px]"><span class="self-start pt-[2px]">Percé par :</span></div>
          <div class="bg-white"></div>
          <div class="${sideCell} text-[8px]"><span class="self-start">Plié par :</span></div>
          <div class="${sideCell} justify-center text-[11px]">CONTROLE FABRICATION</div>
        </div>
      </div>
      <div class="flex items-end justify-end">
        <div class="grid grid-cols-[53px_17px] grid-rows-[17px_16px] gap-px border-t border-l border-black bg-black">
          ${check('1/1/2/2', 'text-[8px]', 'd3a', 'Assemblage')}${tick('1/2/2/3', 'd3a', true, 'italic')}
          ${check('2/1/3/2', 'text-[8px]', 'd3e', 'Expédition')}${tick('2/2/3/3', 'd3e', false, 'italic')}
        </div>
        <div class="grid grid-cols-[71px_129px_65px_64px_52px_78px_53px_85px] grid-rows-[19px_19px_12px_13px_12px_12px_13px_16px] gap-px border-t border-l border-black bg-black">
          ${cell('1/1/2/2', `${g} flex-col text-[8px]`, `<span>CLASSE</span><span>D'EXECUTION ${colon}</span>`)}
          ${cell('2/1/4/2', `${g} flex-col gap-[3px] text-[8px]`, '<span class="text-[17px] text-black italic">EXC2</span><span>NF EN 1090-2</span>')}
          ${cell('4/1/5/2', 'justify-center text-[9px] text-black italic', 'EN 10025-2')}
          ${cell('5/1/6/2', 'justify-center text-[9px] text-black italic', 'EN ISO 1461')}
          ${cell('6/1/9/2', `${g} flex-col text-[8px]`, `<span>Tolérance ${colon}</span><span class="mt-[10px] text-black">NF EN 1090-2</span><span class="mt-px text-black">ANNEXE B</span>`)}
          ${common(z, 'italic', 1, [1,2,3,4,5,6,7,8,9], ['aff','mat','fin','lot'])}
        </div>
      </div>
    </div>
  </article>`;

const reader = ' - Adobe Acrobat Reader (64-bit)';
document.getElementById('desktop').innerHTML =
  appWindow({ frame: 'h-full w-[calc(50%-2px)]', titleH: 'h-[27px] pb-[3px]', padL: 'pl-0', stripW: 'w-4 pl-[3px]', title: '[Débit] - 1002 (A3) 001 A3 (1) with modif.pdf' + reader, tab: '[Débit] - 1002 (A3) ...', docAlign: 'items-center pt-[5px]', doc: doc1, footPad: 'pb-[6px]',
    shadow: '<div class="pointer-events-none absolute inset-y-0 right-0 w-5 bg-linear-to-r from-transparent to-black/15"></div>' }) +
  `<div class="flex h-full min-w-0 flex-1 flex-col border-l-2 border-[#707070]">` +
  appWindow({ frame: 'h-[calc(50%+1px)]', titleH: 'h-[27px] pb-[3px]', padL: 'pl-0.5', stripW: 'w-[18px] pl-[6px]', title: '[Débit] - 1002 (A4) 001 A4 (1) normal.pdf' + reader, tab: '[Débit] - 1002 (A4) ...', docAlign: 'justify-center', doc: doc2, short: true, footPad: 'pb-3',
    shadow: '<div class="pointer-events-none absolute inset-x-0 bottom-0 h-4 bg-linear-to-b from-transparent to-black/10"></div>' }) +
  appWindow({ frame: 'flex-1 border-t-2 border-[#707070]', titleH: 'h-[29px] pb-[3px]', padL: 'pl-0.5', stripW: 'w-[18px] pl-[6px]', title: '[Débit] - 1002 (A4) 001 A4 (1).pdf' + reader, tab: '[Débit] - 1002 (A4) ...', docAlign: 'justify-center', doc: doc3, short: true, footPad: 'pb-[6px]', shadow: '' }) +
  `</div>`;
</script>
</body>
</html>
